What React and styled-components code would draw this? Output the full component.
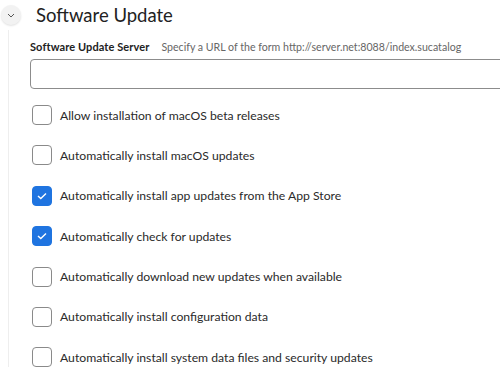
import React from 'react'
import styled, { createGlobalStyle } from 'styled-components'

const GlobalStyle = createGlobalStyle`
  body {
    margin: 0;
    background: #fff;
    font-family: Lato, "Open Sans", sans-serif;
    color: #333;
  }
`

const Page = styled.div`
  width: 500px;
  height: 384px;
  overflow: hidden;
`

const Header = styled.div`
  display: flex;
  align-items: center;
  height: 30px;
  padding-left: 1px;
`

const Toggle = styled.div`
  width: 20px;
  height: 20px;
  border-radius: 50%;
  background: #f2f2f2;
  box-shadow: 0 1px 2px rgba(0, 0, 0, 0.12);
  display: flex;
  align-items: center;
  justify-content: center;
  margin-right: 15px;
`

const Title = styled.h2`
  margin: 0;
  font-size: 18.5px;
  font-weight: 400;
  color: #222;
`

const Body = styled.div`
  margin-left: 8px;
  border-left: 1px solid #eeeeee;
  padding: 10px 0 0 21px;
`

const FieldLabel = styled.div`
  display: flex;
  align-items: baseline;
  gap: 12px;
  margin-bottom: 6px;
`

const LabelName = styled.span`
  font-size: 11px;
  font-weight: 700;
  letter-spacing: 0.1px;
  color: #222;
`

const LabelHint = styled.span`
  font-size: 10.6px;
  color: #666;
`

const Input = styled.div`
  height: 28px;
  width: 500px;
  border: 1px solid #8c8c8c;
  border-radius: 4px;
  margin-bottom: 16px;
`

const List = styled.div`
  display: flex;
  flex-direction: column;
  gap: 20.4px;
  padding-left: 2px;
`

const Row = styled.label`
  display: flex;
  align-items: center;
  gap: 8px;
  font-size: 12.2px;
  color: #2a2a2a;
`

const Box = styled.span`
  box-sizing: border-box;
  width: 20px;
  height: 20px;
  border-radius: 4px;
  border: 1px solid ${p => (p.$checked ? '#1f74e0' : '#8a8a8a')};
  background: ${p => (p.$checked ? '#1f74e0' : '#fff')};
  display: flex;
  align-items: center;
  justify-content: center;
  flex: 0 0 auto;
`

const options = [
  { label: 'Allow installation of macOS beta releases', checked: false },
  { label: 'Automatically install macOS updates', checked: false },
  { label: 'Automatically install app updates from the App Store', checked: true },
  { label: 'Automatically check for updates', checked: true },
  { label: 'Automatically download new updates when available', checked: false },
  { label: 'Automatically install configuration data', checked: false },
  { label: 'Automatically install system data files and security updates', checked: false },
]

export default function App() {
  return (
    <Page>
      <GlobalStyle />
      <Header>
        <Toggle>
          <svg width="8" height="5" viewBox="0 0 8 5">
            <path d="M1 1l3 3 3-3" fill="none" stroke="#555" strokeWidth="1" />
          </svg>
        </Toggle>
        <Title>Software Update</Title>
      </Header>
      <Body>
        <FieldLabel>
          <LabelName>Software Update Server</LabelName>
          <LabelHint>Specify a URL of the form http://server.net:8088/index.sucatalog</LabelHint>
        </FieldLabel>
        <Input />
        <List>
          {options.map(o => (
            <Row key={o.label}>
              <Box $checked={o.checked}>
                {o.checked && (
                  <svg width="10" height="8" viewBox="0 0 10 8">
                    <path d="M1 4l2.8 2.6L9 1.4" fill="none" stroke="#fff" strokeWidth="1.4" />
                  </svg>
                )}
              </Box>
              {o.label}
            </Row>
          ))}
        </List>
      </Body>
    </Page>
  )
}
